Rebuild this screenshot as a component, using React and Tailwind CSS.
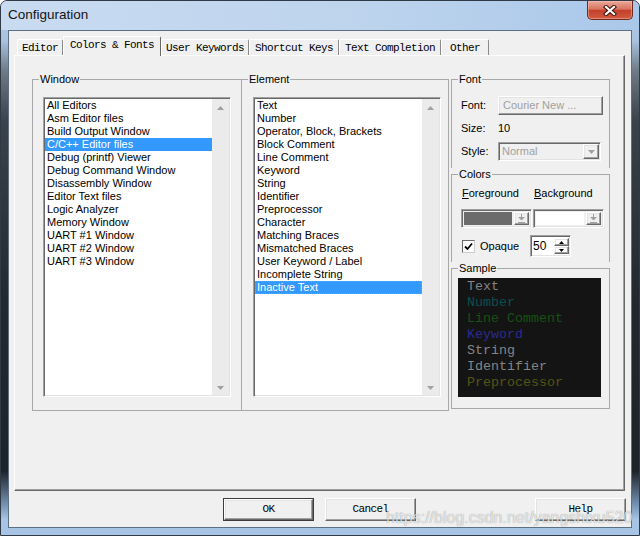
import React from "react";

const ui = "font-['Liberation_Sans',Arial,sans-serif]";
const mono = "font-['Liberation_Mono','Courier_New',monospace]";

// classic 3D borders
const sunken =
  "border border-t-[#a0a0a0] border-l-[#a0a0a0] border-r-white border-b-white shadow-[inset_1px_1px_0_#696969,inset_-1px_-1px_0_#e3e3e3] p-px";
const raised =
  "border border-t-white border-l-white border-r-[#696969] border-b-[#696969] shadow-[inset_-1px_-1px_0_#a0a0a0,inset_1px_1px_0_#e3e3e3]";

const windows = [
  "All Editors",
  "Asm Editor files",
  "Build Output Window",
  "C/C++ Editor files",
  "Debug (printf) Viewer",
  "Debug Command Window",
  "Disassembly Window",
  "Editor Text files",
  "Logic Analyzer",
  "Memory Window",
  "UART #1 Window",
  "UART #2 Window",
  "UART #3 Window",
];

const elements = [
  "Text",
  "Number",
  "Operator, Block, Brackets",
  "Block Comment",
  "Line Comment",
  "Keyword",
  "String",
  "Identifier",
  "Preprocessor",
  "Character",
  "Matching Braces",
  "Mismatched Braces",
  "User Keyword / Label",
  "Incomplete String",
  "Inactive Text",
];

const sample = [
  ["Text", "text-[#848484]"],
  ["Number", "text-[#0c4f4f]"],
  ["Line Comment", "text-[#145214]"],
  ["Keyword", "text-[#2a2a92]"],
  ["String", "text-[#858585]"],
  ["Identifier", "text-[#858585]"],
  ["Preprocessor", "text-[#545414]"],
];

const tabs = [
  ["Editor", "w-[46px]"],
  ["Colors & Fonts", "w-[98px]"],
  ["User Keywords", "w-[88px]"],
  ["Shortcut Keys", "w-[90px]"],
  ["Text Completion", "w-[102px]"],
  ["Other", "w-[48px]"],
];

function Tri({ up, color = "#a0a0a0" }) {
  return (
    <svg width="7" height="4" viewBox="0 0 7 4">
      <polygon points={up ? "0,4 3.5,0 7,4" : "0,0 3.5,4 7,0"} fill={color} />
    </svg>
  );
}

function DownBar() {
  return (
    <svg width="7" height="9" viewBox="0 0 7 9">
      <rect x="3" y="0" width="1" height="3" fill="#a0a0a0" />
      <polygon points="0,3 7,3 3.5,6.5" fill="#a0a0a0" />
      <rect x="0" y="8" width="7" height="1" fill="#a0a0a0" />
    </svg>
  );
}

function ListBox({ items, selected, focus }) {
  return (
    <div className={`w-[188px] h-[300px] bg-white flex ${sunken}`}>
      <div className="flex-1 flex flex-col">
        {items.map((t, i) => (
          <div
            key={t}
            className={`h-[13px] leading-[13px] pl-[2px] text-[11px] whitespace-nowrap ${
              i === selected ? "bg-[#3399ff] text-white" : "text-black"
            } ${
              i === selected && focus
                ? "outline-1 outline-dotted outline-[#e8892c] -outline-offset-1"
                : ""
            }`}
          >
            {t}
          </div>
        ))}
      </div>
      <div className="w-[17px] bg-[#ebebeb] flex flex-col justify-between items-center pt-[7px] pb-[5px]">
        <Tri up />
        <Tri />
      </div>
    </div>
  );
}

function Group({ label, className = "", children }) {
  return (
    <fieldset className={`border border-[#a8a8a8] ${className}`}>
      <legend className="ml-[6px] px-[1px] text-[11px] leading-[13px] text-black">
        {label}
      </legend>
      {children}
    </fieldset>
  );
}

export default function App() {
  return (
    <div
      className={`w-[640px] h-[536px] relative flex flex-col overflow-hidden rounded-t-[7px] border border-[#2f3a46] bg-[linear-gradient(to_bottom,#b4cce8_0px,#a9c2df_40px,#6e7a86_70px,#3a424b_120px,#22282e_300px,#1d2329_470px,#7996b8_505px,#a8c4e4_518px)] ${ui}`}
    >
      {/* title bar */}
      <div className="h-[29px] flex items-start justify-between pl-[7px] pr-[6px] bg-[linear-gradient(to_right,#c8dbf1,#bed4ed_55%,#aac8ea)]">
        <span className="mt-[6px] text-[13.5px] leading-[16px] text-[#141414]">
          Configuration
        </span>
        <div className="w-[46px] h-[19px] flex items-center justify-center rounded-b-[5px] border border-t-0 border-[#6b2a1e] bg-[linear-gradient(to_bottom,#eaa99b_0%,#d9745f_45%,#c4402a_52%,#d25a40_100%)] shadow-[inset_0_0_0_1px_rgba(255,200,190,0.45)]">
          <svg width="14" height="11" viewBox="0 0 14 11">
            <path d="M3 2 L11 9 M11 2 L3 9" stroke="#3a1410" strokeWidth="4.2" strokeLinecap="square" />
            <path d="M3 2 L11 9 M11 2 L3 9" stroke="#ffffff" strokeWidth="2.2" strokeLinecap="square" />
          </svg>
        </div>
      </div>

      {/* client area */}
      <div className="flex-1 flex flex-col px-[7px] pb-[7px]">
        <div className="flex-1 flex flex-col border border-[#5d6f82] bg-[#f0f0f0]">
          {/* tabs */}
          <div className={`flex items-end pl-[8px] pt-[5px] ${mono}`}>
            {tabs.map(([t, w]) =>
              t === "Colors & Fonts" ? (
                <div
                  key={t}
                  className={`${w} h-[20px] -mb-px relative z-10 bg-[#f0f0f0] border-l border-t border-r border-l-white border-t-white border-r-[#696969] rounded-t-[2px] flex items-center justify-center text-[11px] tracking-[-0.6px] text-black pb-[3px]`}
                >
                  {t}
                </div>
              ) : (
                <div
                  key={t}
                  className={`${w} h-[16px] bg-[#f0f0f0] border-l border-t border-r border-l-white border-t-white border-r-[#8a8a8a] rounded-t-[2px] flex items-center justify-center text-[11px] tracking-[-0.6px] text-black pt-px`}
                >
                  {t}
                </div>
              )
            )}
          </div>

          {/* tab panel */}
          <div className="ml-[5px] mr-[6px] h-[436px] border border-t-white border-l-white border-r-[#696969] border-b-[#696969] shadow-[inset_-1px_-1px_0_#a0a0a0] flex items-start pl-[17px] pt-[17px]">
            <Group label="Window" className="w-[210px] h-[338px]">
              <div className="ml-[10px] mt-[11px]">
                <ListBox items={windows} selected={3} />
              </div>
            </Group>
            <Group label="Element" className="w-[208px] h-[338px] -ml-px">
              <div className="ml-[11px] mt-[11px]">
                <ListBox items={elements} selected={14} focus />
              </div>
            </Group>

            <div className="ml-[2px] w-[159px] flex flex-col">
              <Group label="Font" className="h-[95px] border-b-0">
                <div className="mt-[10px] pl-[9px] flex items-center text-[11px]">
                  <span className="w-[37px]">Font:</span>
                  <div className={`w-[105px] h-[19px] bg-[#f0f0f0] flex items-center pl-[4px] text-[#a0a0a0] ${raised}`}>
                    Courier New ...
                  </div>
                </div>
                <div className="mt-[7px] pl-[9px] h-[13px] leading-[13px] flex text-[11px]">
                  <span className="w-[37px]">Size:</span>
                  <span>10</span>
                </div>
                <div className="mt-[7px] pl-[9px] flex items-center text-[11px]">
                  <span className="w-[37px]">Style:</span>
                  <div className={`w-[103px] h-[19px] bg-[#f0f0f0] flex ${sunken}`}>
                    <span className="flex-1 pl-[2px] leading-[15px] text-[#a0a0a0]">Normal</span>
                    <div className={`w-[16px] flex items-center justify-center ${raised}`}>
                      <Tri />
                    </div>
                  </div>
                </div>
              </Group>

              <Group label="Colors" className="h-[94px] border-b-0">
                <div className="mt-[6px] pl-[10px] flex h-[13px] leading-[13px] text-[11px]">
                  <span className="w-[72px]">
                    <span className="underline underline-offset-1">F</span>oreground
                  </span>
                  <span>
                    <span className="underline underline-offset-1">B</span>ackground
                  </span>
                </div>
                <div className="mt-[9px] pl-[9px] flex gap-[1px]">
                  {["bg-[#6b6b6b]", "bg-white"].map((c) => (
                    <div key={c} className={`w-[71px] h-[19px] bg-[#f0f0f0] flex ${sunken}`}>
                      <div className="flex-1 flex gap-[2px] p-px">
                        <div className={`flex-1 ${c}`} />
                        <div className={`w-[15px] flex items-center justify-center ${raised}`}>
                          <DownBar />
                        </div>
                      </div>
                    </div>
                  ))}
                </div>
                <div className="mt-[7px] pl-[10px] flex items-center text-[11px]">
                  <div className="w-[68px] flex items-center">
                    <div className="w-[13px] h-[13px] bg-white border border-t-[#6b6b6b] border-l-[#6b6b6b] border-r-[#cfcfcf] border-b-[#cfcfcf] flex items-center justify-center">
                      <svg width="9" height="9" viewBox="0 0 9 9">
                        <path d="M1 4.5 L3.5 7 L8 1.5" stroke="#000" strokeWidth="1.8" fill="none" />
                      </svg>
                    </div>
                    <span className="ml-[5px]">Opaque</span>
                  </div>
                  <div className={`w-[41px] h-[22px] bg-white flex ${sunken}`}>
                    <span className="flex-1 pl-[1px] text-[12px] leading-[18px]">50</span>
                    <div className="w-[15px] flex flex-col justify-center py-[1px]">
                      <div className={`h-[8px] flex items-center justify-center ${raised}`}>
                        <svg width="5" height="3" viewBox="0 0 5 3">
                          <polygon points="0,3 2.5,0 5,3" fill="#000" />
                        </svg>
                      </div>
                      <div className={`h-[8px] flex items-center justify-center ${raised}`}>
                        <svg width="5" height="3" viewBox="0 0 5 3">
                          <polygon points="0,0 2.5,3 5,0" fill="#000" />
                        </svg>
                      </div>
                    </div>
                  </div>
                </div>
              </Group>

              <Group label="Sample" className="h-[147px]">
                <div className={`mt-[3px] ml-[6px] w-[143px] h-[119px] bg-[#141414] pl-[9px] pt-px ${mono}`}>
                  {sample.map(([t, c]) => (
                    <div key={t} className={`h-[16px] leading-[16px] text-[13.33px] ${c}`}>
                      {t}
                    </div>
                  ))}
                </div>
              </Group>
            </div>
          </div>

          {/* buttons */}
          <div className={`mt-[7px] pl-[214px] flex ${mono} text-[11px] tracking-[-0.6px]`}>
            <div className="w-[91px] h-[23px] border border-[#3c3c3c] flex">
              <div className={`flex-1 flex items-center justify-center ${raised}`}>OK</div>
            </div>
            <div className={`ml-[11px] w-[91px] h-[23px] flex items-center justify-center ${raised}`}>
              Cancel
            </div>
            <div className={`ml-[119px] w-[91px] h-[23px] flex items-center justify-center ${raised}`}>
              Help
            </div>
          </div>
        </div>
      </div>

      {/* watermark */}
      <div className="absolute left-[385px] top-[508px] text-[16px] leading-[18px] text-white/75 [text-shadow:0_0_1px_rgba(0,0,0,0.45)] pointer-events-none">
        https://blog.csdn.net/yangshixu520
      </div>
    </div>
  );
}
